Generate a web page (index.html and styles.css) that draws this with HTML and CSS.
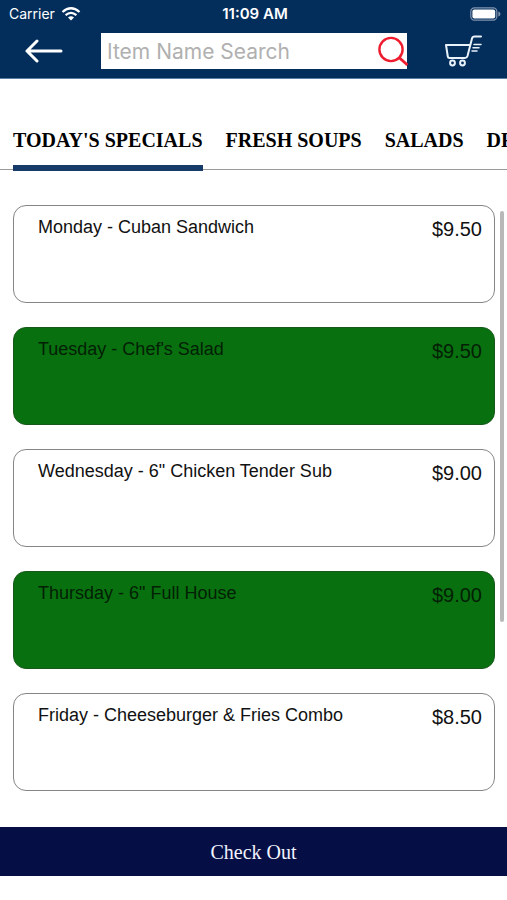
FILE: index.html
```html
<!DOCTYPE html>
<html lang="en">
<head>
<meta charset="utf-8">
<meta name="viewport" content="width=device-width, initial-scale=1">
<title>Today's Specials</title>
<link rel="stylesheet" href="styles.css">
</head>
<body>
<header class="header">
  <div class="status">
    <div class="carrier">Carrier
      <svg width="20" height="14" viewBox="0 0 20 14" fill="none" stroke="#fff" stroke-width="2.3"><path d="M1.5 5Q10-2.4 18.5 5M4.6 8.2Q10 3.6 15.4 8.2"/><path d="M7 10.6Q10 8 13 10.6L10 13.6Z" fill="#fff" stroke="none"/></svg>
    </div>
    <div class="time">11:09 AM</div>
    <div class="battery">
      <svg width="31" height="14" viewBox="0 0 31 14"><rect x=".8" y=".8" width="26" height="12.4" rx="3.6" fill="none" stroke="#8294ad" stroke-width="1.2"/><rect x="2.4" y="2.4" width="22.800" height="9.200" rx="2" fill="#fff"/><path d="M28.3 4.5Q30.5 5.3 30.5 7T28.3 9.500Z" fill="#8294ad"/></svg>
    </div>
  </div>
  <div class="toolbar">
    <button class="icon-button" aria-label="Back">
      <svg width="38" height="24" viewBox="0 0 38 24" fill="none" stroke="#fff" stroke-width="3" stroke-linecap="round" stroke-linejoin="round"><path d="M12 2 2 12l10 10M2 12h34"/></svg>
    </button>
    <form class="search">
      <input class="search-input" type="text" aria-label="Item name search" placeholder="Item Name Search">
      <button class="search-button" type="button" aria-label="Search">
        <svg width="31" height="31" viewBox="0 0 31 31" fill="none" stroke="#ee1c2e" stroke-width="2.4"><circle cx="13" cy="13.500" r="11.600"/><path d="m21 21.500 8.500 7.500" stroke-width="3"/></svg>
      </button>
    </form>
    <button class="icon-button" aria-label="Cart">
      <svg width="38" height="32" viewBox="0 0 38 32" fill="none" stroke="#e9f1fb" stroke-width="2" stroke-linejoin="round" stroke-linecap="round"><path d="M36 1.500h-6.500q-2 0-2.500 2L22.500 21q-.6 2-2.500 2H4.500q-1.500 0-1.700-1.500L1 10h23.500"/><path d="M29 9.500h7M28 12.800h6M27 16h5" stroke-width="1.500"/><circle cx="7.500" cy="28" r="2.400"/><circle cx="17.500" cy="28" r="2.400"/></svg>
    </button>
  </div>
</header>
<nav class="tabs">
  <a class="tab tab-active" href="#specials">TODAY'S SPECIALS</a>
  <a class="tab" href="#soups">FRESH SOUPS</a>
  <a class="tab" href="#salads">SALADS</a>
  <a class="tab" href="#drinks">DRINKS</a>
</nav>
<main class="menu" id="specials">
  <article class="card"><span class="name">Monday - Cuban Sandwich</span><span class="price">$9.50</span></article>
  <article class="card card-green"><span class="name">Tuesday - Chef's Salad</span><span class="price">$9.50</span></article>
  <article class="card"><span class="name">Wednesday - 6" Chicken Tender Sub</span><span class="price">$9.00</span></article>
  <article class="card card-green"><span class="name">Thursday - 6" Full House</span><span class="price">$9.00</span></article>
  <article class="card"><span class="name">Friday - Cheeseburger &amp; Fries Combo</span><span class="price">$8.50</span></article>
  <div class="scroll-thumb"></div>
</main>
<button class="checkout">Check Out</button>
</body>
</html>
```
FILE: styles.css
```css
* { box-sizing: border-box; }

body {
  margin: 0;
  background: #fff;
  color: #111;
  font-family: "Liberation Sans", Arial, sans-serif;
}

button {
  padding: 0;
  border: 0;
  background: none;
}

svg { display: block; }

.header {
  background: #032e5c;
  color: #fff;
  border-bottom: 1px solid #5c7da6;
  padding-bottom: 9px;
}

.status {
  display: grid;
  grid-template-columns: 1fr auto 1fr;
  align-items: center;
  height: 28px;
  padding: 0 6px 0 9px;
  font: 14px/20px Inter, sans-serif;
}

.carrier {
  display: flex;
  align-items: center;
  gap: 6px;
}

.time {
  font-size: 15px;
  font-weight: 600;
}

.battery { justify-self: end; }

.toolbar {
  display: flex;
  align-items: center;
  gap: 38px;
  padding: 5px 24px 0 25px;
}

.icon-button { flex: none; }

.search {
  display: flex;
  flex: 1;
  min-width: 0;
  position: relative;
}

.search-input {
  flex: 1;
  min-width: 0;
  height: 36px;
  padding: 0 36px 0 6px;
  border: 0;
  border-radius: 0;
  background: #fff;
  font: 21px/28px Inter, sans-serif;
}

.search-input::placeholder { color: #b0b0b0; }

.search-button {
  position: absolute;
  right: -2px;
  top: 3px;
}

.tabs {
  display: flex;
  gap: 23px;
  margin-top: 49px;
  padding-left: 13px;
  overflow: hidden;
  background: linear-gradient(#9a9a9a, #9a9a9a) 0 calc(100% - 1px) / 100% 1px no-repeat;
}

.tab {
  flex: none;
  height: 43px;
  color: #000;
  font: bold 20px/24px "Liberation Serif", "Times New Roman", serif;
  text-decoration: none;
  white-space: nowrap;
}

.tab-active { border-bottom: 6px solid #173b69; }

.menu {
  position: relative;
  display: grid;
  gap: 24px;
  padding: 34px 12px 36px 13px;
}

.card {
  display: flex;
  justify-content: space-between;
  height: 98px;
  padding: 9px 12px 0 24px;
  border: 1px solid #858585;
  border-radius: 13px;
}

.card-green {
  background: #09700f;
  border-color: #17591b;
  color: #031f05;
}

.name { font-size: 18px; line-height: 24px; }

.price { font-size: 20px; line-height: 28px; }

.scroll-thumb {
  position: absolute;
  top: 40px;
  right: 3px;
  width: 4px;
  height: 411px;
  border-radius: 2px;
  background: #b8b8b8;
}

.checkout {
  display: block;
  width: 100%;
  height: 49px;
  background: #060f45;
  color: #f2f4ff;
  font: 20px/24px "Liberation Serif", "Times New Roman", serif;
}
```
